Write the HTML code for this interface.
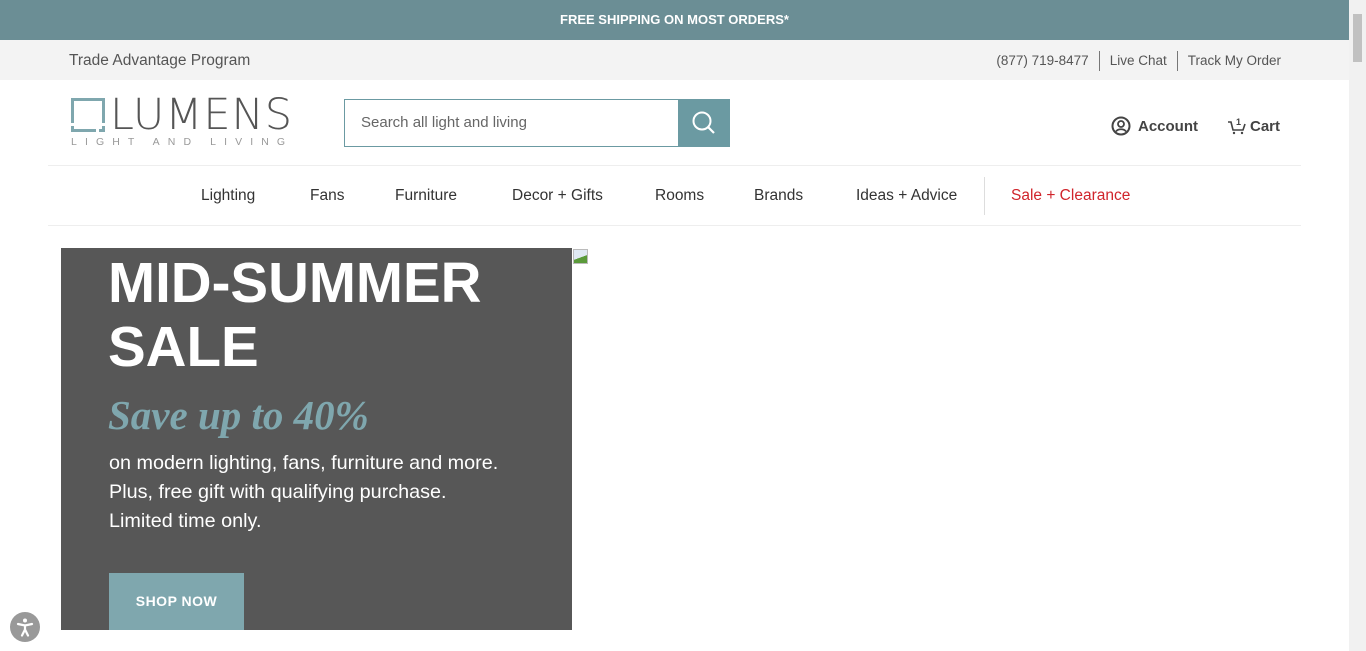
<!DOCTYPE html>
<html><head><meta charset="utf-8">
<style>
*{margin:0;padding:0;box-sizing:border-box}
html,body{width:1366px;height:651px;overflow:hidden;background:#fff;font-family:"Liberation Sans",sans-serif}
.sb{position:absolute;left:1349px;top:0;width:17px;height:651px;background:#f1f1f1}
.sb:after{content:"";position:absolute;left:4px;top:14px;width:9px;height:48px;background:#c1c1c1}
.top{position:absolute;left:0;top:0;width:1349px;height:40px;background:#6b8e95;color:#fff;font-weight:bold;font-size:13px;text-align:center;line-height:40px}
.util{position:absolute;left:0;top:40px;width:1349px;height:40px;background:#f3f3f3;color:#555;font-size:14px}
.util .l{position:absolute;left:69px;top:12px;font-size:15.5px}
.util .r{position:absolute;right:68px;top:11px;font-size:13.5px;display:flex}
.util .r span{padding:0 10px;border-left:1px solid #777;line-height:20px}
.util .r span:first-child{border:none}
.util .r span:last-child{padding-right:0}
.logo{position:absolute;left:71px;top:98px}
.lumens{position:absolute;left:110px;top:90px;font-family:"DejaVu Sans",sans-serif;font-weight:200;font-size:43px;color:#555;letter-spacing:1px}
.tag{position:absolute;left:71px;top:136px;font-size:10.5px;letter-spacing:8.1px;color:#999}
.search{position:absolute;left:344px;top:99px;width:386px;height:48px;border:1px solid #6b9aa2}
.search span{position:absolute;left:16px;top:14px;font-size:15px;color:#666}
.search .b{position:absolute;right:-1px;top:-1px;width:52px;height:48px;background:#6b9aa2}
.acct{position:absolute;left:1111px;top:116px;font-size:15px;font-weight:bold;color:#444;display:flex;align-items:center;gap:7px}
.cart{position:absolute;left:1227px;top:116px;font-size:15px;font-weight:bold;color:#444;display:flex;align-items:center;gap:3px}
.hr1{position:absolute;left:48px;top:165px;width:1253px;height:1px;background:#eee}
.hr2{position:absolute;left:48px;top:225px;width:1253px;height:1px;background:#eee}
.nav{position:absolute;top:187px;font-size:15.5px;color:#333}
.vd{position:absolute;left:984px;top:177px;width:1px;height:38px;background:#ddd}
.hero{position:absolute;left:61px;top:248px;width:511px;height:382px;background:#575757;color:#fff}
.h1{position:absolute;left:47px;top:3px;font-size:56.5px;font-weight:bold;line-height:64px}
.save{position:absolute;left:47px;top:143px;font-family:"Liberation Serif",serif;font-style:italic;font-weight:bold;font-size:41px;color:#7fa7ae}
.p{position:absolute;left:48px;top:201px;font-size:19.8px;line-height:29px}
.btn{position:absolute;left:48px;top:325px;width:135px;height:57px;background:#7fa7ae;font-weight:bold;font-size:14px;text-align:center;line-height:57px;letter-spacing:.5px}
.img{position:absolute;left:573px;top:249px;width:15px;height:15px;border:1px solid #bbb;background:linear-gradient(160deg,#dfe9f3 55%,#5a9a3a 56%)}
.acc{position:absolute;left:10px;top:612px;width:30px;height:30px;border-radius:50%;background:#999}
</style></head><body>
<div class="top">FREE SHIPPING ON MOST ORDERS*</div>
<div class="util"><div class="l">Trade Advantage Program</div>
<div class="r"><span>(877) 719-8477</span><span>Live Chat</span><span>Track My Order</span></div></div>
<svg class="logo" width="34" height="34" viewBox="0 0 34 34"><path d="M1.5 25V1.5H32.5V25M1.5 28V32.5H25M28 32.5H32.5V28" fill="none" stroke="#7fa7ae" stroke-width="3"/></svg>
<div class="lumens">LUMENS</div>
<div class="tag">LIGHT AND LIVING</div>
<div class="search"><span>Search all light and living</span><div class="b"><svg width="52" height="48" viewBox="0 0 52 48"><circle cx="24" cy="22" r="8.5" fill="none" stroke="#fff" stroke-width="2"/><path d="M30 28l6 6" stroke="#fff" stroke-width="2.2"/></svg></div></div>
<div class="acct"><svg width="20" height="20" viewBox="0 0 20 20"><circle cx="10" cy="10" r="8.5" fill="none" stroke="#444" stroke-width="2"/><circle cx="10" cy="8" r="3" fill="none" stroke="#444" stroke-width="1.8"/><path d="M5 15.5c2-3 8-3 10 0" fill="none" stroke="#444" stroke-width="1.8"/></svg>Account</div>
<div class="cart"><svg width="20" height="20" viewBox="0 0 20 20"><path d="M1 6h3l2 8h10l2-6" fill="none" stroke="#444" stroke-width="1.6"/><circle cx="7" cy="17" r="1.2" fill="#444"/><circle cx="15" cy="17" r="1.2" fill="#444"/><text x="9" y="9" font-size="9" font-family="Liberation Sans" fill="#444">1</text></svg>Cart</div>
<div class="hr1"></div><div class="hr2"></div>
<div class="nav" style="left:201px">Lighting</div>
<div class="nav" style="left:310px">Fans</div>
<div class="nav" style="left:395px">Furniture</div>
<div class="nav" style="left:512px">Decor + Gifts</div>
<div class="nav" style="left:655px">Rooms</div>
<div class="nav" style="left:754px">Brands</div>
<div class="nav" style="left:856px">Ideas + Advice</div>
<div class="vd"></div>
<div class="nav" style="left:1011px;color:#d0242b">Sale + Clearance</div>
<div class="hero">
<div class="h1">MID-SUMMER<br>SALE</div>
<div class="save">Save up to 40%</div>
<div class="p">on modern lighting, fans, furniture and more.<br>Plus, free gift with qualifying purchase.<br>Limited time only.</div>
<div class="btn">SHOP NOW</div>
</div>
<div class="img"></div>
<div class="acc"><svg width="30" height="30" viewBox="0 0 30 30"><circle cx="15" cy="8.5" r="2" fill="#fff"/><path d="M8 12l7 1.5 7-1.5M15 13.5v4M15 17.5l-3 6M15 17.5l3 6" fill="none" stroke="#fff" stroke-width="2.2" stroke-linecap="round"/></svg></div>
<div class="sb"></div>
</body></html>
